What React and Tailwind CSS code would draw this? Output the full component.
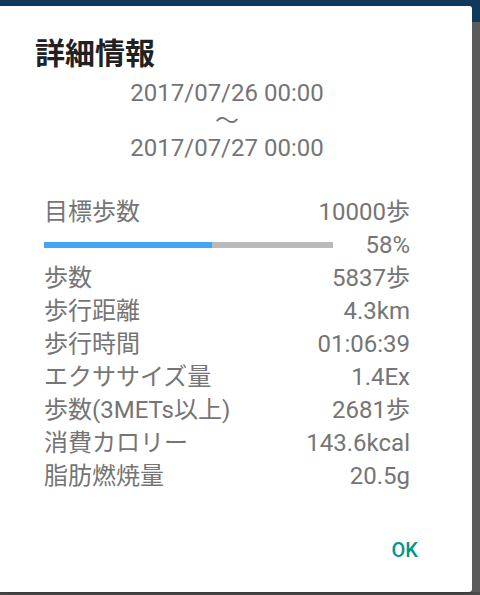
import React from "react";

const rows = [
  ["歩数", "5837歩"],
  ["歩行距離", "4.3km"],
  ["歩行時間", "01:06:39"],
  ["エクササイズ量", "1.4Ex"],
  ["歩数(3METs以上)", "2681歩"],
  ["消費カロリー", "143.6kcal"],
  ["脂肪燃焼量", "20.5g"],
];

export default function App() {
  const pct = 58;
  return (
    <div
      className="w-[480px] h-[595px] bg-[#4a4a4a] flex flex-col overflow-hidden"
      style={{ fontFamily: "Roboto, 'Noto Sans CJK JP', sans-serif" }}
    >
      <div className="h-[6px] bg-[#0e3a5e] shrink-0" />
      <div className="flex shrink-0">
        <div className="w-[472px] h-[586px] bg-white rounded-r-[3px] shadow-[0_1px_3px_rgba(0,0,0,0.3)] flex flex-col">
          <div className="pt-[30px] pl-[35px] text-[30px] leading-[36px] font-bold text-[#212121]">
            詳細情報
          </div>
          <div className="ml-[44px] w-[366px] mt-[8px] flex flex-col items-center text-[24px] leading-[27.5px] text-[#757575]">
            <div>2017/07/26 00:00</div>
            <div>～</div>
            <div>2017/07/27 00:00</div>
          </div>
          <div className="ml-[44px] w-[366px] mt-[33px] flex flex-col text-[24px] leading-[33px] text-[#757575]">
            <div className="flex justify-between">
              <span>目標歩数</span>
              <span>10000歩</span>
            </div>
            <div className="flex items-center justify-between">
              <div className="w-[289px] h-[6px] bg-[#bababa] flex">
                <div className="h-full bg-[#42a5f5]" style={{ width: `${pct}%` }} />
              </div>
              <span>{pct}%</span>
            </div>
            {rows.map(([l, v]) => (
              <div key={l} className="flex justify-between">
                <span>{l}</span>
                <span>{v}</span>
              </div>
            ))}
          </div>
          <div className="mt-[39px] flex justify-end pr-[54px]">
            <span className="text-[20px] leading-[36px] font-medium text-[#009688]">OK</span>
          </div>
        </div>
        <div className="flex-1 bg-[#5a5a5a] flex flex-col">
          <div className="h-[16px] bg-[#0e3a5e]" />
        </div>
      </div>
    </div>
  );
}
